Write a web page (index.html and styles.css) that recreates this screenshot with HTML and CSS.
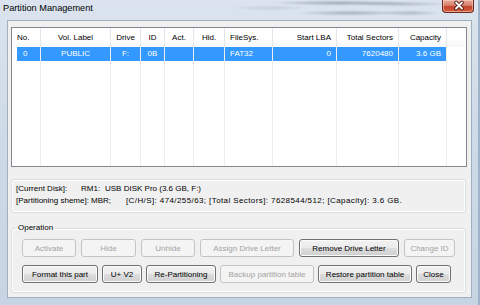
FILE: index.html
```html
<!DOCTYPE html>
<html lang="en">
<head>
    <meta charset="UTF-8">
    <title>Partition Management</title>
    <link rel="stylesheet" href="styles.css">
</head>
<body>
    <div class="window">
        <div class="titlebar">
            <span class="title">Partition Management</span>
            <div class="close-btn">
                <svg width="32" height="13" viewBox="0 0 32 13">
                    <path d="M13 3.5 L19 9.5 M19 3.5 L13 9.5" stroke="#4a1a14" stroke-width="3.6" stroke-linecap="round"/>
                    <path d="M13 3.5 L19 9.5 M19 3.5 L13 9.5" stroke="#ffffff" stroke-width="1.8" stroke-linecap="round"/>
                </svg>
            </div>
        </div>

        <div class="client">
            <!-- partition list -->
            <div class="listview">
                <div class="lv-grid lv-head">
                    <div class="hcell first">No.</div>
                    <div class="hcell center">Vol. Label</div>
                    <div class="hcell center">Drive</div>
                    <div class="hcell center">ID</div>
                    <div class="hcell center">Act.</div>
                    <div class="hcell center">Hid.</div>
                    <div class="hcell left">FileSys.</div>
                    <div class="hcell right">Start LBA</div>
                    <div class="hcell right">Total Sectors</div>
                    <div class="hcell right">Capacity</div>
                </div>
                <div class="lv-grid lv-body">
                    <div class="cell sel first"><span class="no">0</span></div>
                    <div class="cell sel center">PUBLIC</div>
                    <div class="cell sel center">F:</div>
                    <div class="cell sel center">0B</div>
                    <div class="cell sel center"></div>
                    <div class="cell sel center"></div>
                    <div class="cell sel left">FAT32</div>
                    <div class="cell sel right">0</div>
                    <div class="cell sel right">7620480</div>
                    <div class="cell sel right">3.6 GB</div>

                    <div class="cell fill"></div>
                    <div class="cell fill"></div>
                    <div class="cell fill"></div>
                    <div class="cell fill"></div>
                    <div class="cell fill"></div>
                    <div class="cell fill"></div>
                    <div class="cell fill"></div>
                    <div class="cell fill"></div>
                    <div class="cell fill"></div>
                    <div class="cell fill"></div>
                </div>
            </div>

            <!-- disk info -->
            <div class="info">
                <div class="info-line">
                    <span class="lbl w1">[Current Disk]:</span><span class="lbl w2">RM1:</span><span>USB DISK Pro (3.6 GB, F:)</span>
                </div>
                <div class="info-line">
                    <span class="lbl w3">[Partitioning sheme]:</span><span class="lbl w4">MBR;</span><span class="wide">[C/H/S]: 474/255/63; [Total Sectors]: 7628544/512; [Capacity]: 3.6 GB.</span>
                </div>
            </div>

            <fieldset class="operation">
                <legend>Operation</legend>
                <div class="btn-row">
                    <button class="btn b-act" disabled>Activate</button>
                    <button class="btn b-hide" disabled>Hide</button>
                    <button class="btn b-unhide" disabled>Unhide</button>
                    <button class="btn b-assign" disabled>Assign Drive Letter</button>
                    <button class="btn b-remove">Remove Drive Letter</button>
                    <button class="btn b-chid" disabled>Change ID</button>
                </div>
                <div class="btn-row row2">
                    <button class="btn b-format">Format this part</button>
                    <button class="btn b-uv">U+ V2</button>
                    <button class="btn b-repart">Re-Partitioning</button>
                    <button class="btn b-backup" disabled>Backup partition table</button>
                    <button class="btn b-restore">Restore partition table</button>
                    <button class="btn b-close">Close</button>
                </div>
            </fieldset>
        </div>
    </div>
</body>
</html>
```

FILE: styles.css
```css
* { margin: 0; padding: 0; box-sizing: border-box; }
body {
    width: 480px;
    height: 305px;
    overflow: hidden;
    font-family: 'Liberation Sans', Arial, sans-serif;
    font-size: 8px;
    color: #000;
    background: linear-gradient(180deg, #dbe4ee 0%, #cfdbe7 40%, #c6d4e3 100%);
}
.window {
    display: flex;
    flex-direction: column;
    height: 305px;
    border-right: 2px solid #9fb4ca;
}
.titlebar {
    height: 20px;
    display: flex;
    justify-content: space-between;
    align-items: flex-start;
    padding-left: 3px;
    background:
        radial-gradient(ellipse 70px 3px at 340px 3px, rgba(60,70,90,0.35), transparent),
        radial-gradient(ellipse 50px 3px at 400px 4px, rgba(60,70,90,0.25), transparent),
        radial-gradient(ellipse 55px 3px at 350px 13px, rgba(60,70,90,0.3), transparent),
        radial-gradient(ellipse 30px 3px at 410px 13px, rgba(60,70,90,0.25), transparent),
        radial-gradient(ellipse 40px 3px at 270px 8px, rgba(60,70,90,0.12), transparent);
}
.title {
    font-size: 9.2px;
    line-height: 16px;
    color: #000;
}
.close-btn {
    width: 32px;
    height: 13px;
    margin-right: 4px;
    border: 1px solid #6b2a20;
    border-top: none;
    border-radius: 0 0 4px 4px;
    background: linear-gradient(180deg, #e9a99b 0%, #d8806d 45%, #c4432b 55%, #d4603f 100%);
    box-shadow: inset 0 0 0 1px rgba(255,220,210,0.5);
}
.close-btn svg { display: block; margin-top: -1px; }

.client {
    flex: 1;
    margin: 0 6px 7px 7px;
    background: #f0f0f0;
    border: 1px solid #a2afbd;
    padding: 6px 0 0 3px;
}

/* list view */
.listview {
    width: 456px;
    height: 140px;
    border: 1px solid #828790;
    background: #fff;
    display: flex;
    flex-direction: column;
}
.lv-grid {
    display: grid;
    grid-template-columns: 29px 70px 30px 24px 29px 31px 48px 64px 62px 48px;
}
.lv-head {
    height: 19px;
    background: linear-gradient(180deg, #ffffff 0%, #ffffff 50%, #f7f8fa 100%);
}
.hcell {
    line-height: 19px;
    border-right: 1px solid #e2e5ea;
    white-space: nowrap;
}
.lv-body {
    flex: 1;
    grid-template-rows: 14px 1fr;
}
.cell {
    border-right: 1px solid #ededed;
    line-height: 13px;
    white-space: nowrap;
}
.sel {
    background: #3399ff;
    background-clip: padding-box;
    color: #fff;
}
.sel.first {
    background: linear-gradient(90deg, transparent 5px, #3399ff 5px);
    background-clip: padding-box;
}
.first { padding-left: 5px; }
.no { padding-left: 6px; }
.center { text-align: center; }
.left { padding-left: 5px; }
.right { text-align: right; padding-right: 5px; }

/* info box */
.info {
    width: 455px;
    height: 34px;
    margin-top: 12px;
    border: 1px solid #d5dfe5;
    border-radius: 3px;
    box-shadow: inset 0 0 0 1px #fff;
    padding: 3px 0 0 4px;
}
.info-line {
    line-height: 12px;
    white-space: nowrap;
}
.lbl { display: inline-block; }
.w1 { width: 65px; }
.w2 { width: 24px; }
.w3 { width: 75px; }
.w4 { width: 35px; }
.wide { letter-spacing: 0.4px; }

/* operation group */
.operation {
    width: 455px;
    height: 70px;
    margin-top: 10px;
    border: 1px solid #d5dfe5;
    border-radius: 3px;
    box-shadow: inset 0 0 0 1px #fff;
    padding: 6px 0 0 10px;
}
.operation legend {
    margin-left: -6px;
    padding: 0 2px;
    line-height: 10px;
    font-size: 8px;
}
.btn-row {
    display: flex;
    gap: 5px;
}
.row2 { gap: 4px; margin-top: 8px; }
.btn {
    height: 18px;
    font-family: 'Liberation Sans', Arial, sans-serif;
    font-size: 8px;
    color: #000;
    border: 1px solid #707070;
    border-radius: 3px;
    background: linear-gradient(180deg, #f2f2f2 0%, #ebebeb 50%, #dddddd 51%, #cfcfcf 100%);
    box-shadow: inset 0 0 0 1px #fbfbfb;
    white-space: nowrap;
}
.btn:disabled {
    color: #a3a3a3;
    border-color: #c4c4c4;
    background: #f4f4f4;
    box-shadow: none;
}
.b-act { width: 54px; }
.b-hide { width: 55px; }
.b-unhide { width: 54px; }
.b-assign { width: 94px; }
.b-remove { width: 100px; }
.b-chid { width: 51px; }
.b-format { width: 76px; }
.b-uv { width: 40px; }
.b-repart { width: 70px; }
.b-backup { width: 94px; }
.b-restore { width: 94px; }
.b-close { width: 35px; }
```
